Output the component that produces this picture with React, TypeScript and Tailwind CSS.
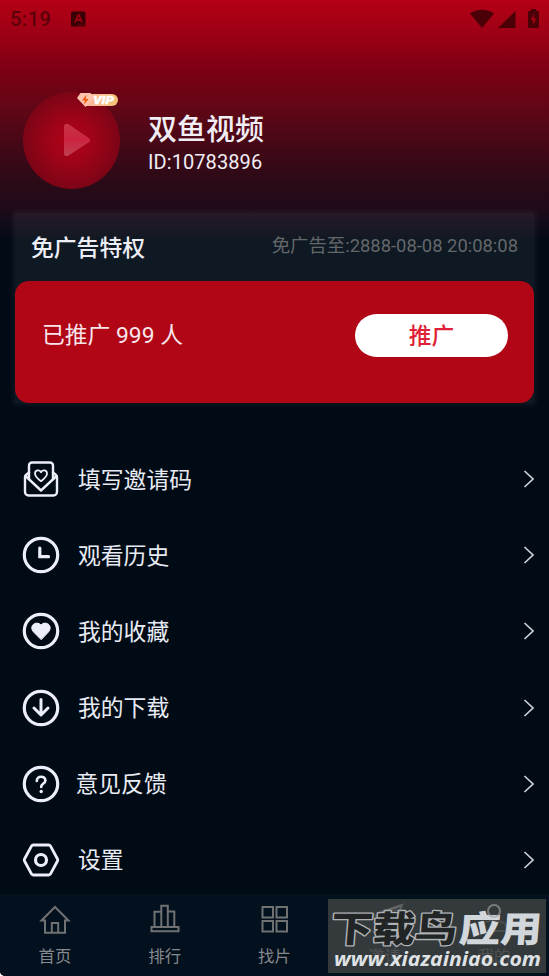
import React from 'react';

interface MenuRowProps {
  icon: React.ReactNode;
  label: string;
  labelClass?: string;
}

interface TabProps {
  icon: React.ReactNode;
  label: string;
}

const StatusBar: React.FC = () => {
  return (
    <div className="flex h-[38px] items-center justify-between pl-[10px] pr-[10px] text-[#4b0007]">
      <div className="flex items-center gap-[20px]">
        <span className="text-[20px] font-medium leading-[38px] tracking-[0.5px] text-[#5c0009]">5:19</span>
        <svg width="15" height="16" viewBox="0 0 15 16">
          <rect x="0" y="0.5" width="14.5" height="15" rx="1.5" fill="#3a0006" />
          <path d="M4 11.500 7.200 4h.8l3 7.500M5.300 8.800h4.500" fill="none" stroke="#a30013" strokeWidth="1.700" />
          <path d="M7.500 14h1M9.700 14h1M11.900 14h1" stroke="#a30013" strokeWidth="1" />
        </svg>
      </div>
      <svg width="69" height="20" viewBox="0 0 69 20" fill="#4b0007">
        <path d="M0 4.500C7-.4 17-.4 24 4.500L12 19z" />
        <path d="M45.500 2v17H28z" />
        <path d="M61 0h5v1.800h1.500a1.500 1.500 0 0 1 1.500 1.500v14.200a1.500 1.500 0 0 1-1.500 1.500h-8a1.500 1.500 0 0 1-1.500-1.500V3.300a1.500 1.500 0 0 1 1.500-1.500H61z" />
        <path d="M64 4.500 60.800 11h2.200v5.500l3.400-7h-2.300z" fill="#a30013" />
      </svg>
    </div>
  );
};

const VipBadge: React.FC = () => {
  return (
    <svg className="absolute left-[54px] top-0" width="42" height="15" viewBox="0 0 42 15">
      <defs>
        <linearGradient id="vip" x1="0" x2="1">
          <stop offset="0" stopColor="#fbb79d" />
          <stop offset="1" stopColor="#f5c277" />
        </linearGradient>
      </defs>
      <path d="M8 2h27a6 6 0 0 1 0 12H8z" fill="url(#vip)" />
      <path d="M3.500 1h10L17 6 8.500 15 0 6z" fill="#ffc4ac" />
      <path d="M9.500 2.500 5 8.500h3L7 13l4.500-6H8.700z" fill="#f2570d" />
      <text x="16" y="11.600" fontSize="10.500" fontWeight="900" fontStyle="italic" fill="#fff" stroke="#fff" strokeWidth="0.400" textLength="21" lengthAdjust="spacingAndGlyphs">VIP</text>
    </svg>
  );
};

const Profile: React.FC = () => {
  return (
    <div className="flex pl-[23px] pt-[54px]">
      <div className="relative h-[97px] w-[97px]">
        <svg width="97" height="97" viewBox="0 0 97 97">
          <defs>
            <radialGradient id="avatar">
              <stop offset="0" stopColor="#b20217" />
              <stop offset="0.45" stopColor="#9f0318" />
              <stop offset="1" stopColor="#7c0516" />
            </radialGradient>
            <linearGradient id="play" x1="0.3" y1="0" x2="0.3" y2="1">
              <stop offset="0" stopColor="#c43443" />
              <stop offset="0.5" stopColor="#cc2441" />
              <stop offset="1" stopColor="#bd4050" />
            </linearGradient>
          </defs>
          <circle cx="48.500" cy="48.500" r="48.500" fill="url(#avatar)" />
          <path d="M41 35c0-3 3-4 5-2.500l20 13.800c1.700 1.200 1.700 2.700 0 3.900L45.500 63.500c-2 1.200-4.500.5-4.500-2z" fill="url(#play)" />
        </svg>
        <VipBadge />
      </div>
      <div className="pl-[28px] pt-[19px] text-[#f0edf4]">
        <h1 className="text-[29px] font-medium leading-[38px]">双鱼视频</h1>
        <p className="text-[20px] leading-[26px] tracking-[0.080px]">ID:10783896</p>
      </div>
    </div>
  );
};

const PromoCard: React.FC = () => {
  return (
    <section className="mx-[15px] mt-[24px] h-[190px] bg-white/6 shadow-[0_0_5px_2px_rgba(255,255,255,0.06)]">
      <div className="flex h-[68px] items-center justify-between px-[16px]">
        <h2 className="pt-[5px] text-[22.800px] font-medium text-[#edeef6]">免广告特权</h2>
        <span className="pb-[3px] text-[18.400px] text-[#646769]">免广告至:2888-08-08 20:08:08</span>
      </div>
      <div className="flex h-[122px] items-start justify-between rounded-[14px] bg-[#b00615] pl-[27px] pr-[26px] pt-[33px]">
        <span className="text-[22.800px] leading-[43px] text-[#f8e5ec]">已推广 999 人</span>
        <button className="h-[43px] w-[153px] rounded-full bg-white pt-[2px] text-[22.800px] font-medium leading-[41px] text-[#e01f38]">推广</button>
      </div>
    </section>
  );
};

const MenuRow: React.FC<MenuRowProps> = ({ icon, label, labelClass = 'pl-[18px]' }) => {
  return (
    <li className="flex h-[76.200px] items-center pl-[22px] pr-[14px]">
      <svg className="shrink-0" width="38" height="38" viewBox="0 0 38 38" fill="none" stroke="#eceef8" strokeWidth="3.200" strokeLinecap="round" strokeLinejoin="round">
        {icon}
      </svg>
      <span className={`flex-1 pt-[3px] text-[22.800px] text-[#e9ebf4] ${labelClass}`}>{label}</span>
      <svg width="12" height="18" viewBox="0 0 12 18" fill="none" stroke="#cfd1d5" strokeWidth="1.700">
        <path d="M1.500 1 10 9l-8.500 8" />
      </svg>
    </li>
  );
};

const Tab: React.FC<TabProps> = ({ icon, label }) => {
  return (
    <div className="flex flex-1 flex-col items-center pt-[9px]">
      <svg width="32" height="32" viewBox="0 0 32 32" fill="none" stroke="#6f7173" strokeWidth="2">
        {icon}
      </svg>
      <span className="mt-[10px] text-[16.400px] leading-[24px] text-[#85888c]">{label}</span>
    </div>
  );
};

const ring = <circle cx="19" cy="19" r="16.700" />;

const menu: MenuRowProps[] = [
  {
    label: '填写邀请码',
    icon: (
      <g strokeWidth="2.400">
        <path d="M7 19V5.500a3 3 0 0 1 3-3h18a3 3 0 0 1 3 3V19" />
        <path d="M7 12.500 4.500 14.500C3.600 15.200 3 16 3 17v15a3.500 3.500 0 0 0 3.500 3.500h25A3.500 3.500 0 0 0 35 32V17c0-1-.6-1.800-1.500-2.500L31 12.500" />
        <path d="m3.500 16 15.500 14.500L34.500 16" />
        <path d="M19 21.200c-2.800-2-6-4.400-6-7.600 0-3.600 4.300-4.300 6-1.400 1.700-2.900 6-2.200 6 1.400 0 3.200-3.200 5.600-6 7.600z" strokeWidth="1.800" />
      </g>
    ),
  },
  { label: '观看历史', icon: <>{ring}<path d="M17.800 12v8.700H26.500" strokeWidth="3.200" strokeLinejoin="miter" /></> },
  { label: '我的收藏', icon: <>{ring}<path d="M19 27.500 11.300 19.700c-5-6 3.200-11.700 7.700-6.600 4.500-5.100 12.700.6 7.700 6.600z" fill="#eceef8" strokeWidth="1" /></> },
  { label: '我的下载', icon: <>{ring}<path d="M19 10.500v15M12 19l7 7 7-7" strokeWidth="3" /></> },
  {
    label: '意见反馈',
    labelClass: 'pl-[15.500px]',
    icon: <>{ring}<path d="M14.800 16c0-5.800 8.600-5.500 8.600-.6 0 3.200-4.200 3.200-4.200 6.600" strokeWidth="2.600" /><circle cx="19.200" cy="26.500" r="1.700" fill="#eceef8" stroke="none" /></>,
  },
  {
    label: '设置',
    icon: <><path d="M11.200 4h15.600a2 2 0 0 1 1.600.9L35.500 18a2 2 0 0 1 0 2l-7.100 13.100a2 2 0 0 1-1.600.9H11.200a2 2 0 0 1-1.600-.9L2.500 20a2 2 0 0 1 0-2L9.600 4.900a2 2 0 0 1 1.600-.9z" strokeWidth="2.800" /><circle cx="19" cy="19" r="5.500" /></>,
  },
];

const tabs: TabProps[] = [
  { label: '首页', icon: <path d="M2.500 17.500 16 4l13.500 13.500H26v12.300H6V17.500zM12.800 29.500V20h6.400v9.500" /> },
  { label: '排行', icon: <path d="M2.500 24h27v4.300h-27zM5.500 24V8.800h6.800V24M12.300 24V2.800h6.500V24M18.800 24V8.500h6.500V24" /> },
  { label: '找片', icon: <path d="M4.500 4H15v10.500H4.500zM18.500 4H29v10.500H18.500zM4.500 18H15v10.500H4.500zM18.500 18H29v10.500H18.500z" /> },
  { label: '邀请', icon: <path d="M3 14 30 4l-7 24-8-8zM30 4 15 20" /> },
  { label: '我的', icon: <><circle cx="16" cy="8" r="6" /><path d="M4 28v-5c0-7 24-7 24 0v5z" /></> },
];

const Watermark: React.FC = () => {
  return (
    <div className="absolute bottom-[3px] right-[3px] h-[74px] w-[218px] bg-[#414344]/80">
      <svg width="218" height="74" viewBox="0 0 218 74">
        <g transform="translate(0 42.500) scale(1 0.860) skewX(-4)" fontFamily="'Noto Sans CJK SC', sans-serif" fontSize="42" fontWeight="900">
          <text x="2" y="0" textLength="126" fill="#222526" stroke="#b0b3b5" strokeWidth="3" paintOrder="stroke" strokeLinejoin="round" lengthAdjust="spacingAndGlyphs">下载鸟</text>
          <text x="130" y="0" textLength="83" fill="#d2d7db" lengthAdjust="spacingAndGlyphs">应用</text>
        </g>
        <g fill="none" stroke="#9a9d9f" strokeWidth="2">
          <path d="M50 14 74 6l-4 9" opacity="0.4" />
          <circle cx="166" cy="12" r="6" opacity="0.6" />
        </g>
        <text x="6" y="66.500" textLength="207" fill="#dfe2e4" fontFamily="'Open Sans', sans-serif" fontSize="20" fontWeight="700" fontStyle="italic" lengthAdjust="spacingAndGlyphs">www.xiazainiao.com</text>
      </svg>
    </div>
  );
};

const App: React.FC = () => {
  return (
    <div className="h-[976px] w-[549px] bg-white">
      <div className="relative flex h-full flex-col overflow-hidden rounded-bl-[5px] bg-[#010b16] font-[Roboto,'Noto_Sans_CJK_SC',sans-serif]">
        <main className="h-[894px] overflow-hidden bg-[linear-gradient(to_bottom,#b50015_0px,#9c0015_35px,#7d0014_70px,#630616_105px,#450816_145px,#2c0a17_180px,#210b1a_205px,#010b16_242px)]">
          <StatusBar />
          <Profile />
          <PromoCard />
          <ul className="pt-[38px]">
            {menu.map((item) => (
              <MenuRow key={item.label} {...item} />
            ))}
          </ul>
        </main>
        <nav className="flex h-[82px] bg-[#03101e]">
          {tabs.map((tab) => (
            <Tab key={tab.label} {...tab} />
          ))}
        </nav>
        <Watermark />
      </div>
    </div>
  );
};

export default App;
